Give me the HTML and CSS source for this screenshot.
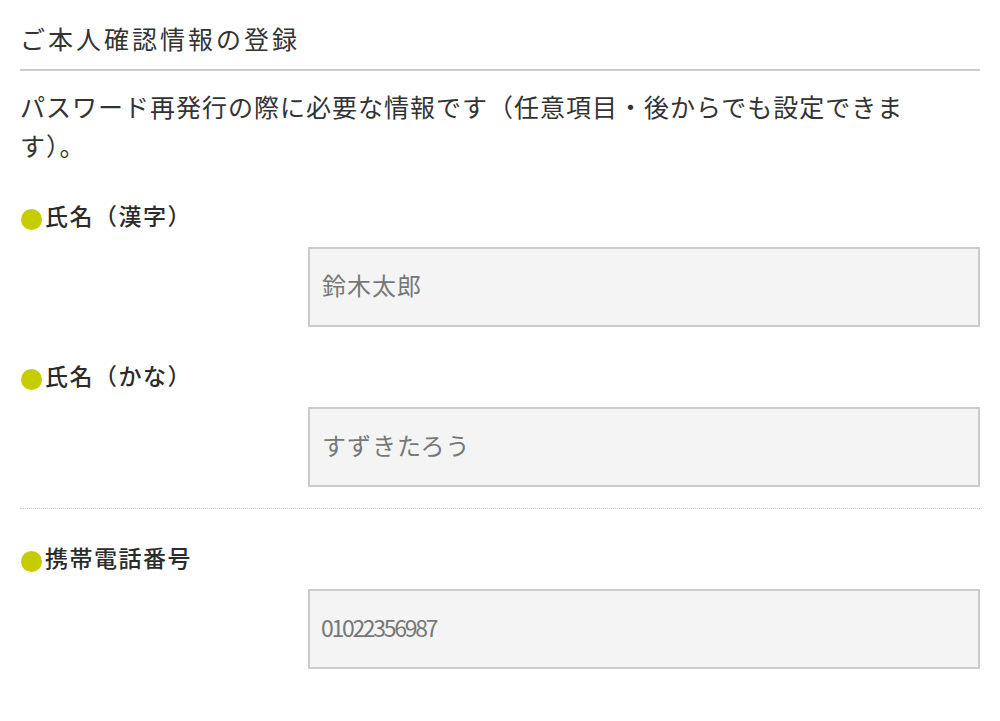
FILE: index.html
```html
<!DOCTYPE html>
<html lang="ja">
<head>
<meta charset="utf-8">
<title>ご本人確認情報の登録</title>
<link rel="stylesheet" href="styles.css">
</head>
<body>
<main class="page">
  <h1 class="title">ご本人確認情報の登録</h1>
  <p class="lead">パスワード再発行の際に必要な情報です（任意項目・後からでも設定できます）。</p>

  <section class="group">
    <div class="field">
      <label class="label" for="name-kanji"><span class="dot"></span>氏名（漢字）</label>
      <input class="input" id="name-kanji" type="text" placeholder="鈴木太郎">
    </div>
    <div class="field">
      <label class="label" for="name-kana"><span class="dot"></span>氏名（かな）</label>
      <input class="input" id="name-kana" type="text" placeholder="すずきたろう">
    </div>
  </section>

  <section class="group group-sep">
    <div class="field">
      <label class="label" for="tel"><span class="dot"></span>携帯電話番号</label>
      <input class="input input-tel" id="tel" type="tel" placeholder="01022356987">
    </div>
  </section>
</main>
</body>
</html>
```
FILE: styles.css
```css
* { box-sizing: border-box; }

html, body {
  margin: 0;
  padding: 0;
  background: #fff;
}

body {
  font-family: "Noto Sans CJK JP", "Noto Sans", sans-serif;
  color: #333;
}

.page {
  padding: 18px 20px 0;
  width: 1000px;
}

.title {
  margin: 0;
  font-size: 25px;
  font-weight: 400;
  line-height: 40px;
  letter-spacing: 3px;
  color: #333;
  padding-bottom: 11px;
  border-bottom: 2px solid #cccccc;
}

.lead {
  margin: 16px 0 0;
  max-width: 935px;
  font-size: 25px;
  line-height: 39px;
  letter-spacing: 1px;
  color: #333;
}

.group {
  display: flex;
  flex-direction: column;
  gap: 32px;
  padding-top: 34px;
}

.group-sep {
  margin-top: 21px;
  padding-top: 32px;
  border-top: 1px dotted #c4c4c4;
}

.field {
  display: flex;
  flex-direction: column;
  gap: 16px;
}

.label {
  display: flex;
  align-items: center;
  height: 32px;
  font-size: 23px;
  font-weight: 500;
  letter-spacing: 1.5px;
  color: #2b2b2b;
}

.dot {
  width: 21px;
  height: 21px;
  border-radius: 50%;
  background: #c5cc00;
  margin: 9px 3px 0 1px;
  flex: none;
}

.input {
  align-self: flex-end;
  width: 672px;
  height: 80px;
  margin: 0;
  padding: 0 12px 5px;
  border: 2px solid #cccccc;
  border-radius: 0;
  background: #f4f4f4;
  font-family: "Noto Sans CJK JP", "Noto Sans", sans-serif;
  font-size: 24px;
  letter-spacing: 1px;
  color: #333;
  outline: none;
}

.input::placeholder {
  color: #777;
  opacity: 1;
}

.input-tel {
  font-size: 23px;
  letter-spacing: -2.3px;
  padding-left: 11px;
}
```
